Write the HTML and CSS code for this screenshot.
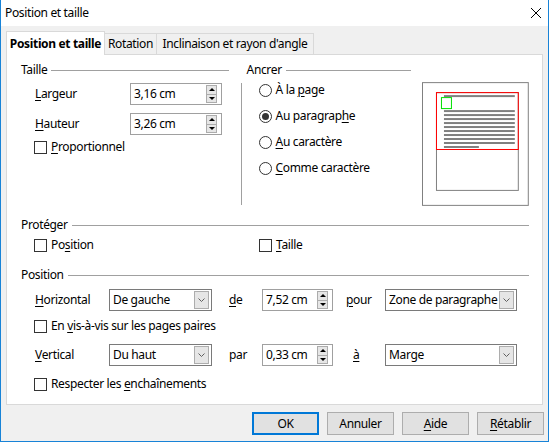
FILE: index.html
```html
<!DOCTYPE html>
<html lang="fr">
<head>
    <meta charset="UTF-8">
    <title>Position et taille</title>
    <link rel="stylesheet" href="styles.css">
</head>
<body>
<div class="window">
    <div class="titlebar">
        <span class="title">Position et taille</span>
        <svg class="close" width="10" height="10" viewBox="0 0 10 10"><path d="M0 0L10 10M10 0L0 10" stroke="#000" stroke-width="1"/></svg>
    </div>

    <div class="tabs">
        <div class="tab active">Position et taille</div>
        <div class="tab t-rot">Rotation</div>
        <div class="tab t-inc">Inclinaison et rayon d'angle</div>
    </div>

    <div class="panel">
        <div class="top-row">
            <div class="group size-group">
                <div class="heading"><span>Taille</span><i></i></div>
                <div class="field-row first">
                    <span class="label"><u>L</u>argeur</span>
                    <div class="spin w-size"><span class="val">3,16 cm</span><span class="arrows"><b class="up"></b><b class="down"></b></span></div>
                </div>
                <div class="field-row">
                    <span class="label"><u>H</u>auteur</span>
                    <div class="spin w-size"><span class="val">3,26 cm</span><span class="arrows"><b class="up"></b><b class="down"></b></span></div>
                </div>
                <div class="check-row prop"><span class="cb"></span><span><u>P</u>roportionnel</span></div>
            </div>

            <div class="vsep"></div>

            <div class="group anchor-group">
                <div class="heading"><span>Ancrer</span><i></i></div>
                <div class="radio-list">
                    <div class="radio-row"><span class="rb"></span><span>À la <u>p</u>age</span></div>
                    <div class="radio-row"><span class="rb on"></span><span>Au paragrap<u>h</u>e</span></div>
                    <div class="radio-row"><span class="rb"></span><span><u>A</u>u caractère</span></div>
                    <div class="radio-row"><span class="rb"></span><span><u>C</u>omme caractère</span></div>
                </div>
            </div>

            <svg class="preview" width="107" height="124" viewBox="0 0 107 124">
                <rect x="0.5" y="0.5" width="106" height="123" fill="#fff" stroke="#808080"/>
                <rect x="14.5" y="10.5" width="82" height="98" fill="none" stroke="#808080"/>
                <g fill="#808080">
                    <rect x="22" y="13" width="71" height="2"/>
                    <rect x="22" y="28" width="71" height="2"/>
                    <rect x="22" y="32" width="71" height="2"/>
                    <rect x="22" y="36" width="71" height="2"/>
                    <rect x="22" y="40" width="71" height="2"/>
                    <rect x="22" y="44" width="71" height="2"/>
                    <rect x="22" y="48" width="71" height="2"/>
                    <rect x="22" y="52" width="71" height="2"/>
                    <rect x="22" y="56" width="71" height="2"/>
                    <rect x="22" y="60" width="71" height="2"/>
                    <rect x="22" y="64" width="35" height="2"/>
                </g>
                <rect x="14.5" y="10.5" width="82" height="57" fill="none" stroke="#ff0000"/>
                <rect x="19.5" y="15.5" width="10" height="11" fill="none" stroke="#00e000"/>
            </svg>
        </div>

        <div class="heading section protect-head"><span>Protéger</span><i></i></div>
        <div class="check-row protect">
            <div class="check-item first"><span class="cb"></span><span>Po<u>s</u>ition</span></div>
            <div class="check-item"><span class="cb"></span><span><u>T</u>aille</span></div>
        </div>

        <div class="heading section position-head"><span>Position</span><i></i></div>
        <div class="pos-row horiz">
            <span class="label pos-label"><u>H</u>orizontal</span>
            <div class="select w-left"><span class="val">De gauche</span><span class="drop"><svg width="7" height="4" viewBox="0 0 7 4"><path d="M0.5 0.5L3.5 3.5L6.5 0.5" stroke="#606060" fill="none"/></svg></span></div>
            <span class="word"><u>d</u>e</span>
            <div class="spin w-pos"><span class="val">7,52 cm</span><span class="arrows"><b class="up"></b><b class="down"></b></span></div>
            <span class="word word-right"><u>p</u>our</span>
            <div class="select w-right"><span class="val">Zone de paragraphe</span><span class="drop"><svg width="7" height="4" viewBox="0 0 7 4"><path d="M0.5 0.5L3.5 3.5L6.5 0.5" stroke="#606060" fill="none"/></svg></span></div>
        </div>
        <div class="check-row mirror"><span class="cb"></span><span>En <u>v</u>is-à-vis sur les pages paires</span></div>

        <div class="pos-row vert">
            <span class="label pos-label"><u>V</u>ertical</span>
            <div class="select w-left"><span class="val">Du haut</span><span class="drop"><svg width="7" height="4" viewBox="0 0 7 4"><path d="M0.5 0.5L3.5 3.5L6.5 0.5" stroke="#606060" fill="none"/></svg></span></div>
            <span class="word">par</span>
            <div class="spin w-pos"><span class="val">0,33 cm</span><span class="arrows"><b class="up"></b><b class="down"></b></span></div>
            <span class="word word-right a-word"><u>à</u></span>
            <div class="select w-right"><span class="val">Marge</span><span class="drop"><svg width="7" height="4" viewBox="0 0 7 4"><path d="M0.5 0.5L3.5 3.5L6.5 0.5" stroke="#606060" fill="none"/></svg></span></div>
        </div>
        <div class="check-row follow"><span class="cb"></span><span>Respecter les <u>e</u>nchaînements</span></div>
    </div>

    <div class="buttons">
        <button class="btn default">OK</button>
        <button class="btn">Annuler</button>
        <button class="btn"><u>A</u>ide</button>
        <button class="btn"><u>R</u>établir</button>
    </div>
</div>
</body>
</html>
```

FILE: styles.css
```css
* {
    box-sizing: border-box;
}

body {
    margin: 0;
    background: #fff;
    font-family: "Noto Sans", "DejaVu Sans", sans-serif;
    font-size: 12px;
    line-height: 16px;
    letter-spacing: -0.35px;
    color: #000;
}

u {
    text-decoration-thickness: 1px;
    text-underline-offset: 2px;
}

.window {
    width: 549px;
    height: 442px;
    border: 1px solid #1883d7;
    border-top: none;
    background: #f0f0f0;
    display: flex;
    flex-direction: column;
}

.titlebar {
    height: 26px;
    flex: none;
    background: #fff;
    display: flex;
    align-items: center;
    justify-content: space-between;
    padding: 0 7px 0 4px;
}

/* tabs */
.tabs {
    height: 28px;
    flex: none;
    display: flex;
    align-items: flex-end;
    padding-left: 5px;
}

.tab {
    height: 21px;
    padding-top: 2px;
    text-align: center;
    border: 1px solid #d9d9d9;
    border-bottom: none;
    margin-left: -1px;
    background: #f0f0f0;
}

.tab.active {
    margin-left: 0;
    width: 99px;
    height: 24px;
    padding-top: 4px;
    margin-bottom: -1px;
    background: #fff;
    font-weight: bold;
    position: relative;
    z-index: 1;
}

.t-rot {
    width: 53px;
}

.t-inc {
    width: 158px;
}

/* panel */
.panel {
    margin: 0 5px;
    height: 351px;
    flex: none;
    background: #fff;
    border: 1px solid #d9d9d9;
    padding: 7px 13px 0 14px;
}

.heading {
    display: flex;
    align-items: center;
    height: 16px;
}

.heading i {
    flex: 1;
    height: 1px;
    background: #a0a0a0;
    margin-left: 4px;
}

.top-row {
    display: flex;
    align-items: flex-start;
}

.size-group {
    width: 208px;
}

.field-row {
    display: flex;
    align-items: center;
    padding-left: 14px;
    margin-top: 8px;
}

.field-row.first {
    margin-top: 5px;
}

.label {
    width: 95px;
}

.check-row {
    display: flex;
    align-items: center;
    height: 16px;
    padding-left: 13px;
}

.check-row.prop {
    margin-top: 4px;
}

.cb {
    flex: none;
    width: 13px;
    height: 13px;
    border: 1px solid #333;
    background: #fff;
    margin-right: 4px;
}

.vsep {
    width: 1px;
    height: 122px;
    margin: 21px 0 0 12px;
    background: #a0a0a0;
}

.anchor-group {
    width: 165px;
    margin-left: 5px;
}

.radio-list {
    display: flex;
    flex-direction: column;
    gap: 10px;
    margin-top: 4px;
    padding-left: 12px;
}

.radio-row {
    display: flex;
    align-items: center;
    height: 16px;
}

.rb {
    flex: none;
    width: 13px;
    height: 13px;
    border: 1px solid #333;
    border-radius: 50%;
    background: #fff;
    margin-right: 4px;
    display: grid;
    place-items: center;
}

.rb.on::after {
    content: "";
    width: 7px;
    height: 7px;
    border-radius: 50%;
    background: #333;
}

.preview {
    display: block;
    margin: 20px 0 0 11px;
}

/* lower sections */
.section.protect-head {
    margin-top: 11px;
}

.check-row.protect {
    margin-top: 4px;
}

.check-item {
    display: flex;
    align-items: center;
}

.check-item.first {
    width: 225px;
}

.section.position-head {
    margin-top: 14px;
}

.pos-row {
    display: flex;
    align-items: center;
    height: 22px;
    padding-left: 14px;
}

.pos-row.horiz {
    margin-top: 6px;
}

.check-row.mirror {
    margin-top: 7px;
}

.pos-row.vert {
    margin-top: 10px;
}

.check-row.follow {
    margin-top: 10px;
}

.pos-label {
    width: 74px;
}

.word {
    width: 33px;
    margin-left: 17px;
}

.word-right {
    width: 39px;
    margin-left: 13px;
}

.a-word {
    padding-left: 7px;
}

/* inputs */
.spin {
    display: flex;
    align-items: center;
    justify-content: space-between;
    height: 22px;
    border: 1px solid #a0a0a0;
    background: #fff;
    padding: 0 4px 0 3px;
}

.w-size {
    width: 92px;
}

.w-pos {
    width: 71px;
}

.arrows {
    display: flex;
    flex-direction: column;
    width: 11px;
    height: 18px;
}

.arrows b {
    flex: 1;
    background: #e6e6e6;
    border: 1px solid #acacac;
    display: grid;
    place-items: center;
}

.arrows b + b {
    border-top: none;
}

.arrows b::before {
    content: "";
    border-left: 3px solid transparent;
    border-right: 3px solid transparent;
}

.arrows .up::before {
    border-bottom: 3px solid #000;
}

.arrows .down::before {
    border-top: 3px solid #000;
}

.select {
    display: flex;
    align-items: center;
    justify-content: space-between;
    height: 22px;
    border: 1px solid #7a7a7a;
    background: #fff;
    padding: 0 2px 0 3px;
}

.w-left {
    width: 103px;
}

.w-right {
    width: 132px;
}

.drop {
    flex: none;
    width: 15px;
    height: 18px;
    background: #e6e6e6;
    border: 1px solid #adadad;
    display: grid;
    place-items: center;
}

.drop svg {
    display: block;
}

/* buttons */
.buttons {
    display: flex;
    justify-content: flex-end;
    gap: 8px;
    margin-top: 7px;
    padding-right: 4px;
}

.btn {
    width: 67px;
    height: 23px;
    padding: 0;
    font: inherit;
    letter-spacing: inherit;
    color: #000;
    background: #e1e1e1;
    border: 1px solid #adadad;
}

.btn.default {
    border: 2px solid #0078d7;
}
```
